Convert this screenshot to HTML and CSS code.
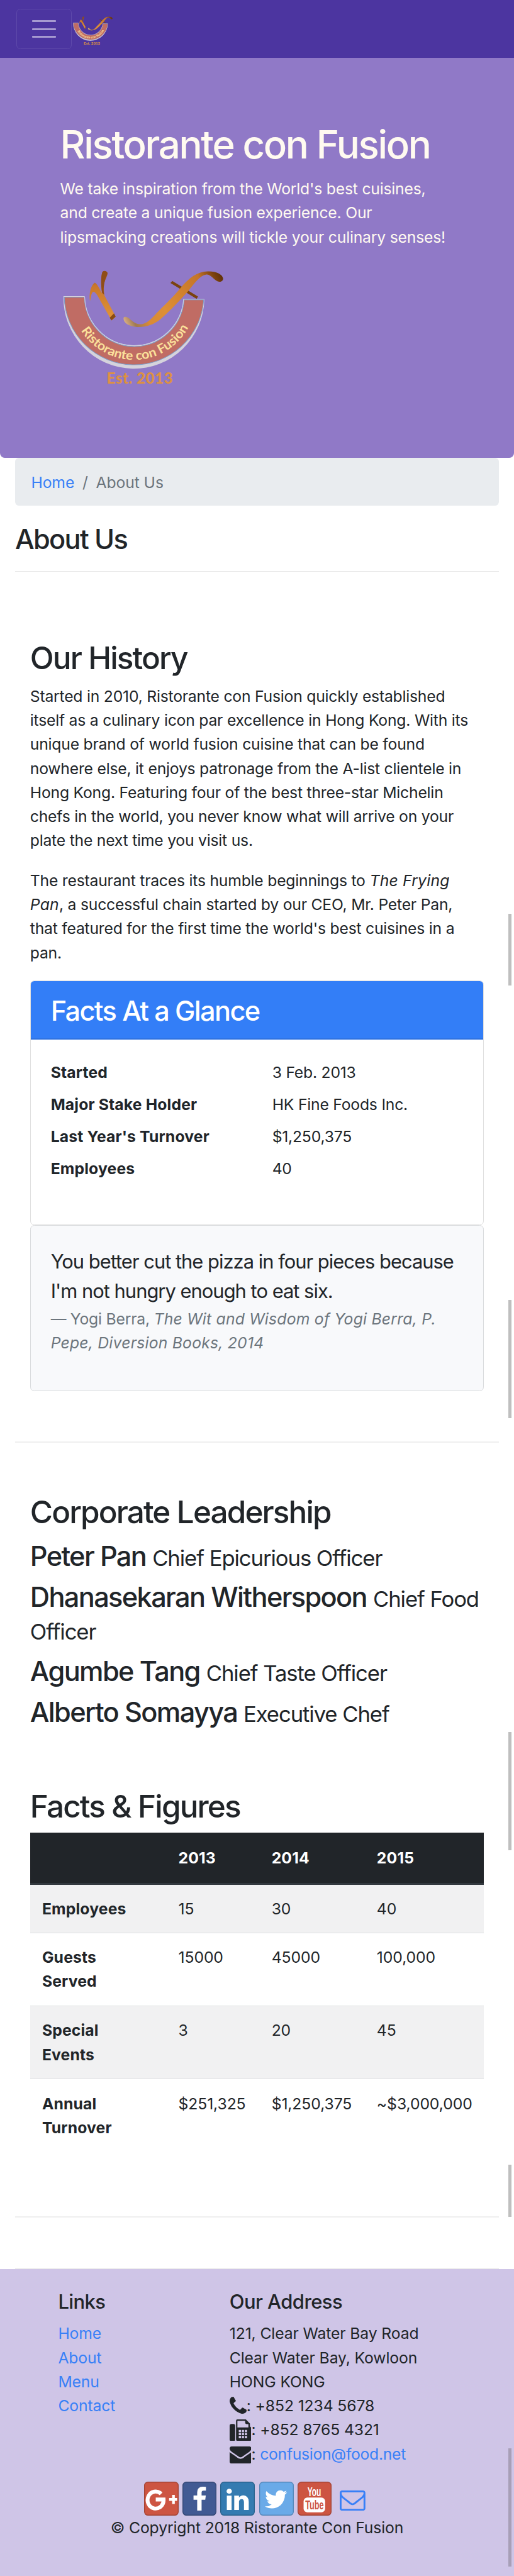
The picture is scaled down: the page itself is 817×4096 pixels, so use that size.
FILE: index.html
```html
<!DOCTYPE html>
<html lang="en">
<head>
<meta charset="utf-8">
<title>Ristorante Con Fusion: About Us</title>
<link rel="stylesheet" href="styles.css">
</head>
<body>
<svg class="defs" aria-hidden="true">
  <defs>
    <linearGradient id="gold" x1="0" y1="0" x2="0" y2="1">
      <stop offset="0" stop-color="#8a4a14"/><stop offset=".3" stop-color="#c9772a"/><stop offset="1" stop-color="#e2953a"/>
    </linearGradient>
    <linearGradient id="goldF" gradientUnits="userSpaceOnUse" x1="438" y1="390" x2="1033" y2="100">
      <stop offset="0" stop-color="#e8bd92"/><stop offset=".1" stop-color="#a07a50"/><stop offset=".22" stop-color="#d98a35"/><stop offset=".4" stop-color="#dd8f35"/><stop offset=".8" stop-color="#c57529"/><stop offset=".93" stop-color="#7d430f"/><stop offset="1" stop-color="#5f3008"/>
    </linearGradient>
    <path id="curve" d="M128 225A372 372 0 0 0 872 225"/>
    <symbol id="logo" viewBox="60 27 1000 733">
      <path d="M78 215H205A297 302 0 0 0 798 232H922A422 426 0 0 1 78 215Z" fill="#d5d3dc"/>
      <path d="M83 221H204A299 303 0 0 0 801 237H918A418 416 0 0 1 83 221Z" fill="#c06c64" stroke="#7d9cc8" stroke-width="4"/>
      <path d="M205 218A297 302 0 0 0 798 232" fill="none" stroke="#c9cfe2" stroke-width="4"/>
      <path d="M237 245C230 205 240 150 266 134C276 138 284 152 292 166C300 182 304 190 308 196C302 150 303 95 311 72C316 60 340 62 342 78C342 96 328 112 322 140C318 165 320 190 324 212L391 338L366 360L282 212C272 196 262 182 252 192C243 205 243 228 237 245Z" fill="url(#gold)"/>
      <path d="M366 360L391 338L381 318L355 344Z" fill="#8a4c14"/>
      <path d="M311 72C302 100 302 150 310 196L322 206C312 160 328 112 342 78C338 60 316 60 311 72Z" fill="#8f4d17"/>
      <path d="M719 136L730 124L884 217L876 231Z" fill="#7a430f"/>
      <path d="M438 345C446 334 462 340 476 352C500 374 524 388 552 382C584 374 610 346 640 312C690 262 730 225 776 170C830 105 882 66 945 67C990 66 1030 84 1034 108C1035 126 1018 132 1000 126C972 112 960 82 930 86C896 92 860 140 826 184C770 246 722 296 672 342C632 380 580 402 520 400C470 396 436 376 438 345Z" fill="url(#goldF)"/>
      <text class="logo-ring"><textPath href="#curve" startOffset="205" textLength="778" lengthAdjust="spacingAndGlyphs">Ristorante con Fusion</textPath></text>
      <text class="logo-est" x="337" y="738" textLength="396" lengthAdjust="spacing">Est. 2013</text>
    </symbol>
  </defs>
</svg>

<nav class="navbar">
  <button class="toggler" aria-label="Toggle navigation"><span></span><span></span><span></span></button>
  <svg class="brand"><use href="#logo"/></svg>
</nav>

<header class="jumbotron">
  <h1>Ristorante con Fusion</h1>
  <p>We take inspiration from the World's best cuisines,<br>and create a unique fusion experience. Our<br>lipsmacking creations will tickle your culinary senses!</p>
  <svg class="hero-logo"><use href="#logo"/></svg>
</header>

<main class="container">
  <ol class="breadcrumb"><li><a href="#">Home</a></li><li class="sep">/</li><li>About Us</li></ol>
  <h3 class="page-title">About Us</h3>
  <hr>

  <section class="row-content first">
    <h2>Our History</h2>
    <p>Started in 2010, Ristorante con Fusion quickly established<br>itself as a culinary icon par excellence in Hong Kong. With its<br>unique brand of world fusion cuisine that can be found<br>nowhere else, it enjoys patronage from the A-list clientele in<br>Hong Kong. Featuring four of the best three-star Michelin<br>chefs in the world, you never know what will arrive on your<br>plate the next time you visit us.</p>
    <p>The restaurant traces its humble beginnings to <em>The Frying<br>Pan</em>, a successful chain started by our CEO, Mr. Peter Pan,<br>that featured for the first time the world's best cuisines in a<br>pan.</p>
    <div class="card facts">
      <h3 class="card-header">Facts At a Glance</h3>
      <dl class="card-body">
        <dt>Started</dt><dd>3 Feb. 2013</dd>
        <dt>Major Stake Holder</dt><dd>HK Fine Foods Inc.</dd>
        <dt>Last Year's Turnover</dt><dd>$1,250,375</dd>
        <dt>Employees</dt><dd>40</dd>
      </dl>
    </div>
    <blockquote class="card quote">
      <p>You better cut the pizza in four pieces because<br>I'm not hungry enough to eat six.</p>
      <footer>— Yogi Berra, <cite>The Wit and Wisdom of Yogi Berra, P.<br>Pepe, Diversion Books, 2014</cite></footer>
    </blockquote>
  </section>

  <section class="row-content second">
    <h2>Corporate Leadership</h2>
    <h3>Peter Pan <small>Chief Epicurious Officer</small></h3>
    <h3>Dhanasekaran Witherspoon <small>Chief Food<br>Officer</small></h3>
    <h3>Agumbe Tang <small>Chief Taste Officer</small></h3>
    <h3>Alberto Somayya <small>Executive Chef</small></h3>
    <h2 class="figures">Facts &amp; Figures</h2>
    <table>
      <colgroup><col class="c1"><col class="c2"><col class="c3"><col class="c4"></colgroup>
      <thead><tr><th></th><th>2013</th><th>2014</th><th>2015</th></tr></thead>
      <tbody>
        <tr><th>Employees</th><td>15</td><td>30</td><td>40</td></tr>
        <tr><th>Guests<br>Served</th><td>15000</td><td>45000</td><td>100,000</td></tr>
        <tr><th>Special<br>Events</th><td>3</td><td>20</td><td>45</td></tr>
        <tr><th>Annual<br>Turnover</th><td>$251,325</td><td>$1,250,375</td><td>~$3,000,000</td></tr>
      </tbody>
    </table>
  </section>
  <div class="row-content empty"></div>
</main>

<footer class="footer">
  <div class="cols">
    <div class="links">
      <h5>Links</h5>
      <ul><li><a href="#">Home</a></li><li><a href="#">About</a></li><li><a href="#">Menu</a></li><li><a href="#">Contact</a></li></ul>
    </div>
    <div class="address">
      <h5>Our Address</h5>
      <address>
        <div>121, Clear Water Bay Road</div>
        <div>Clear Water Bay, Kowloon</div>
        <div>HONG KONG</div>
        <div class="contact"><svg class="i-phone" viewBox="192 128 1408 1408"><path d="M1600 1240q0 27-10 70.500t-21 68.500q-21 50-122 106-94 51-186 51-27 0-53-3.500t-57.500-12.500-47-14.500-55.500-20.500-49-18q-98-35-175-83-127-79-264-216t-216-264q-48-77-83-175-3-9-18-49t-20.500-55.500-14.500-47-12.500-57.500-3.500-53q0-92 51-186 56-101 106-122 25-11 68.500-21t70.500-10q14 0 21 3 18 6 53 76 11 19 30 54t35 63.500 31 53.500q3 4 17.500 25t21.500 35.500 7 28.500q0 20-28.500 50t-62 55-62 53-28.500 46q0 9 5 22.500t8.500 20.500 14 24 11.500 19q76 137 174 235t235 174q2 1 19 11.500t24 14 20.500 8.500 22.500 5q18 0 46-28.500t53-62 55-62 50-28.500q14 0 28.500 7t35.500 21.500 25 17.500q25 15 53.500 31t63.500 35 54 30q70 35 76 53 3 7 3 21z"/></svg><span>: +852 1234 5678</span></div>
        <div class="contact"><svg class="i-fax" viewBox="0 0 129 129"><rect x="0" y="27" width="33" height="102" rx="11"/><path fill-rule="evenodd" d="M38 8Q38 0 46 0H96L120 24V42Q129 46 129 58V114Q129 129 114 129H50Q38 129 38 117ZM46 8V47H111V28H100Q92 28 92 20V8ZM54 62V75H67V62ZM72 62V75H85V62ZM90 62V75H103V62ZM54 80V93H67V80ZM72 80V93H85V80ZM90 80V93H103V80ZM54 98V112H67V98ZM72 98V112H85V98ZM90 98V112H103V98Z"/></svg><span>: +852 8765 4321</span></div>
        <div class="contact"><svg class="i-mail" viewBox="0 256 1792 1408"><path d="M1792 710v794q0 66-47 113t-113 47h-1472q-66 0-113-47t-47-113v-794q44 49 101 87 362 246 497 345 57 42 92.500 65.500t94.500 48 110 24.500h2q51 0 110-24.500t94.500-48 92.500-65.500q170-123 498-345 57-39 100-87zm0-294q0 79-49 151t-122 123q-376 261-468 325-10 7-42.500 31t-54 38.500-52 32.500-57.500 27-50 9h-2q-23 0-50-9t-57.500-27-52-32.500-54-38.500-42.500-31q-91-64-262-182.500t-205-142.500q-62-42-117-115.500t-55-136.500q0-78 41.500-130t118.500-52h1472q65 0 112.500 47t47.500 113z"/></svg><span>: <a href="#">confusion@food.net</a></span></div>
      </address>
    </div>
  </div>
  <div class="social">
    <a class="btn google" href="#"><svg viewBox="0 0 204 204"><path d="M102 73A48 51 0 1 0 117 107H70" fill="none" stroke="#fff" stroke-width="23"/><path d="M150 98H168V79H184V98H198V115H184V134H168V115H150Z" fill="#fff"/></svg></a>
    <a class="btn facebook" href="#"><svg viewBox="0 0 204 204"><path transform="translate(25 30) scale(.0862)" fill="#fff" d="M1343 12v264h-157q-86 0-116 36t-30 108v189h293l-39 296h-254v759h-306v-759h-255v-296h255v-218q0-186 104-288.500t277-102.500q147 0 228 12z"/></svg></a>
    <a class="btn linkedin" href="#"><svg viewBox="0 0 204 204"><path transform="translate(27 30) scale(.0865)" fill="#fff" d="M477 625v991h-330v-991h330zm21-306q1 73-50.500 122t-135.500 49h-2q-82 0-132-49t-50-122q0-74 51.500-122.500t134.500-48.500 133 48.500 51 122.500zm1166 729v568h-329v-530q0-105-40.500-164.500t-126.500-59.500q-63 0-105.500 34.500t-63.500 85.500q-11 30-11 81v553h-329q2-399 2-647t-1-296l-1-48h329v144h-2q20-32 41-56t56.500-52 87-43.500 114.500-15.500q171 0 275 113.500t104 332.500z"/></svg></a>
    <a class="btn twitter" href="#"><svg viewBox="0 0 204 204"><path transform="translate(25 30) scale(.0845)" fill="#fff" d="M1684 408q-67 98-162 167 1 14 1 42 0 130-38 259.500t-115.500 248.500-184.500 210.500-258 146-323 54.500q-271 0-496-145 35 4 78 4 225 0 401-138-105-2-188-64.500t-114-159.500q33 5 61 5 43 0 85-11-112-23-185.500-111.500t-73.500-205.500v-4q68 38 146 41-66-44-105-115t-39-154q0-88 44-163 121 149 294.500 238.500t371.500 99.500q-8-38-8-74 0-134 94.500-228.500t228.500-94.500q140 0 236 102 109-21 205-78-37 115-142 178 93-10 186-50z"/></svg></a>
    <a class="btn youtube" href="#"><svg viewBox="0 0 204 204"><text class="yt" x="59" y="87" textLength="82" lengthAdjust="spacingAndGlyphs" fill="#fff">You</text><rect x="36" y="95" width="129" height="89" rx="22" fill="#fff"/><text class="yt" x="46" y="166" textLength="111" lengthAdjust="spacingAndGlyphs" fill="#cd5542">Tube</text></svg></a>
    <a class="mail" href="#"><svg viewBox="0 256 1792 1408"><path fill="#3880f7" d="M1664 1504v-768q-32 36-69 66-268 206-426 338-51 43-83 67t-86.500 48.500-102.500 24.500h-2q-48 0-102.500-24.500t-86.500-48.500-83-67q-158-132-426-338-37-30-69-66v768q0 13 9.500 22.500t22.500 9.500h1472q13 0 22.500-9.500t9.500-22.500zm0-1051v-24.500l-.5-13-3-12.500-5.500-9-9-7.500-14-2.500h-1472q-13 0-22.500 9.500t-9.500 22.500q0 168 147 284 193 152 401 317 6 5 35 29.500t46 37.500 44.500 31.500 50.500 27.500 43 9h2q20 0 43-9t50.500-27.500 44.500-31.500 46-37.500 35-29.500q208-165 401-317 54-43 100.500-115.500t46.500-131.500zm128-37v1088q0 66-47 113t-113 47h-1472q-66 0-113-47t-47-113v-1088q0-66 47-113t113-47h1472q66 0 113 47t47 113z"/></svg></a>
  </div>
  <p class="copyright">© Copyright 2018 Ristorante Con Fusion</p>
</footer>

<i class="scroll s1"></i><i class="scroll s2"></i><i class="scroll s3"></i><i class="scroll s4"></i><i class="scroll s5"></i>
</body>
</html>
```
FILE: styles.css
```css
* { box-sizing: border-box; }
html { font-size: 25.485px; }
body {
  position: relative;
  margin: 0;
  min-height: 4096px;
  background: #fff;
  color: #212529;
  font: 400 .97rem/1.5rem Inter, "Liberation Sans", sans-serif;
  letter-spacing: -.009em;
  white-space: nowrap;
  overflow-x: hidden;
}
h1, h2, h3, h5, p, ol, ul, dl, dd, blockquote { margin: 0; padding: 0; }
ol, ul { list-style: none; }
address { font-style: normal; }
a { color: #3880f7; text-decoration: none; }
h1, h2, h3, h5 { font-weight: 500; }
h1 { font-size: 2.425rem; line-height: 3rem; letter-spacing: -.038em; }
h2 { font-size: 1.94rem; line-height: 2.375rem; padding-top: .04rem; margin-bottom: .46rem; letter-spacing: -.038em; }
h3 { font-size: 1.7rem; line-height: 2.0625rem; padding-top: .04rem; margin-bottom: .46rem; letter-spacing: -.038em; }
h5 { font-size: 1.215rem; line-height: 1.5rem; margin-bottom: .5rem; letter-spacing: -.018em; }
small { font-size: 1.36rem; line-height: 1; font-weight: 400; letter-spacing: -.031em; }
em, cite { letter-spacing: .009em; }
p { margin-bottom: 1rem; }
svg { display: block; }
.defs { position: absolute; width: 0; height: 0; }
.logo-ring { font: 700 76px Lato, sans-serif; fill: #fbe09a; letter-spacing: 0; }
.logo-est { font: 900 92px Lato, sans-serif; fill: #dc9142; letter-spacing: 0; }

.navbar { display: flex; height: 3.625rem; padding: .5625rem 0 0 1.03rem; background: #4c35a0; }
.toggler {
  display: flex; flex-direction: column; justify-content: center; align-items: center; gap: .375rem;
  width: 3.45rem; height: 2.5rem; padding: 0;
  background: none; border: 1.6px solid #5e49aa; border-radius: .25rem;
}
.toggler span { width: 1.5rem; height: .125rem; border-radius: .04rem; background: #a69ad0; }
.brand { width: 2.569rem; height: 1.883rem; margin: .375rem 0 0 .02rem; }

.jumbotron {
  height: 24.9375rem; padding: 3.90625rem 0 0 3.75rem;
  background: #9079c7; color: #fffaf0; border-radius: 0 0 .3rem .3rem;
  letter-spacing: -.0085em;
}
.jumbotron h1 { margin-bottom: .5rem; }
.hero-logo { width: 10.417rem; height: 7.635rem; }

.container { padding: 0 .9375rem; }
.breadcrumb { display: flex; gap: .5rem; height: 3rem; padding: .77rem 1rem; border-radius: .25rem; background: #e9ecef; color: #6c757d; letter-spacing: -.004em; }
.page-title { margin: 1rem 0 .96rem; }
hr { height: .0625rem; margin: 0; border: 0; background: #e5e5e5; }
.row-content { padding: 3.125rem .9375rem; border-bottom: 2px solid #efefef; }
.row-content.first { height: 54.3125rem; padding-top: 4.125rem; }
.row-content.second { height: 48.375rem; }
.row-content.empty { height: 3.1875rem; padding: 0; }
.card { border: 1.6px solid #dfdfdf; border-radius: .25rem; overflow: hidden; }
.facts { height: 15.25rem; }
.card-header { height: 3.65rem; margin: 0; padding: .81rem 1.25rem 0; background: #337ef7; color: #fff; border-bottom: 2px solid #2e71de; }
.card-body { display: grid; grid-template-columns: 13.8125rem 1fr; row-gap: .5rem; padding: 1.27rem 1.25rem 0; }
dt { font-weight: 700; letter-spacing: .006em; }
.quote { height: 10.375rem; padding: 1.28rem 1.25rem 0; background: #f8f9fb; border-color: #d9dbdd; }
.quote p { margin: 0 0 .03rem; font-size: 1.2125rem; line-height: 1.875rem; letter-spacing: -.032em; }
.quote footer { color: #6c757d; }

.figures { margin-top: 3.625rem; }
table { width: 100%; table-layout: fixed; border-collapse: collapse; text-align: left; }
.c1 { width: 8.5rem; } .c2 { width: 5.8125rem; } .c3 { width: 6.5625rem; }
th, td { padding: .75rem .75rem 0; vertical-align: top; font-weight: 400; letter-spacing: -.004em; }
th { font-weight: 700; letter-spacing: .006em; }
thead th { padding-top: .8rem; }
thead tr { height: 3.1875rem; background: #212529; color: #fff; border-bottom: 3px solid #32383e; }
tbody tr { height: 4.5625rem; border-bottom: 1.6px solid #dee0e2; }
tbody tr:first-child { height: 3.0625rem; }
tbody tr:last-child { border-bottom: 0; }
tbody tr:nth-child(odd) { background: #f1f1f2; }

.footer { height: 19.15rem; padding-top: 1.29rem; background: #cfc5e7; letter-spacing: -.005em; }
.cols { display: flex; height: 12rem; }
.links { width: 14.3125rem; padding-left: 3.625rem; }
.contact { display: flex; height: 1.5rem; }
.contact svg { fill: #212529; flex: none; }
.contact a { letter-spacing: -.012em; }
.i-phone { width: 1.06rem; height: 1.06rem; margin-top: .19rem; }
.i-fax { width: 1.36rem; height: 1.36rem; margin-top: .09rem; }
.i-mail { width: 1.36rem; height: 1.07rem; margin-top: .28rem; }
.social { display: flex; gap: .25rem; padding-left: 9rem; height: 2.125rem; }
.btn { width: 2.125rem; height: 2.125rem; border-radius: .25rem; box-shadow: inset 0 0 0 1.4px rgba(0,0,0,.2); }
.btn svg { width: 100%; height: 100%; overflow: visible; }
.google, .youtube { background: #cd5542; }
.facebook { background: #415a93; }
.linkedin { background: #347bb1; }
.twitter { margin-left: .06rem; background: #6aaae8; }
.yt { font: 700 74px "Liberation Sans", sans-serif; letter-spacing: 0; }
.mail { margin: .53rem 0 0 .27rem; }
.mail svg { width: 1.6rem; height: 1.26rem; }
.copyright { margin: 0; text-align: center; }

.scroll { position: absolute; left: 31.7rem; width: .19rem; background: #bfbfbf; }
.s1 { top: 57rem; height: 4.5rem; }
.s2 { top: 81.1rem; height: 7.4rem; }
.s3 { top: 108.05rem; height: 7.4rem; }
.s4 { top: 135.05rem; height: 3.25rem; }
.s5 { top: 152.75rem; height: 7.4rem; background: #a89fb7; }
```
